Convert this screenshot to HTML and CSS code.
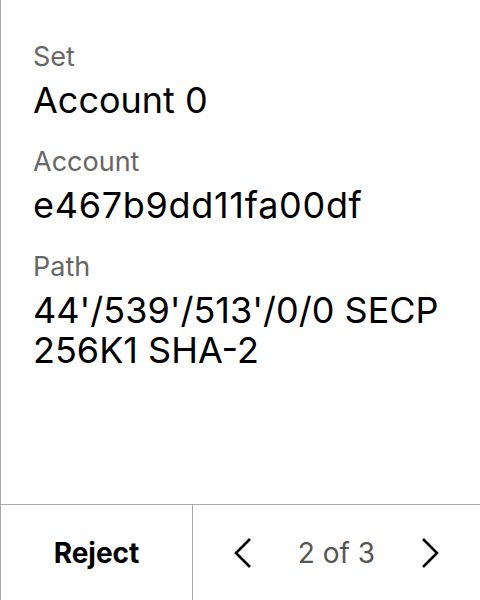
FILE: index.html
```html
<!DOCTYPE html>
<html>
<head>
<meta charset="utf-8">
<link rel="stylesheet" href="styles.css">
</head>
<body>
<div class="screen">
  <div class="content">
    <div class="field">
      <div class="label">Set</div>
      <div class="value">Account 0</div>
    </div>
    <div class="field">
      <div class="label">Account</div>
      <div class="value value-wide">e467b9dd11fa00df</div>
    </div>
    <div class="field">
      <div class="label">Path</div>
      <div class="value">44'/539'/513'/0/0 SECP 256K1 SHA-2</div>
    </div>
  </div>
  <div class="footer">
    <div class="reject">Reject</div>
    <div class="pager">
      <svg class="chev" width="20" height="32" viewBox="0 0 20 32"><path d="M17 2 L3 16 L17 30" fill="none" stroke="#000" stroke-width="2.6"/></svg>
      <span class="count">2 of 3</span>
      <svg class="chev" width="20" height="32" viewBox="0 0 20 32"><path d="M3 2 L17 16 L3 30" fill="none" stroke="#000" stroke-width="2.6"/></svg>
    </div>
  </div>
</div>
</body>
</html>
```
FILE: styles.css
```css
html, body {
  margin: 0;
  padding: 0;
  background: #fff;
}
.screen {
  width: 480px;
  height: 600px;
  box-sizing: border-box;
  border-left: 1px solid #aaa;
  display: flex;
  flex-direction: column;
  font-family: Inter, "Noto Sans", sans-serif;
}
.content {
  flex: 1;
  padding: 41px 24px 0 32px;
  display: flex;
  flex-direction: column;
  gap: 26px;
}
.field {
  display: flex;
  flex-direction: column;
  gap: 7px;
}
.label {
  font-size: 27px;
  line-height: 32px;
  color: #666;
}
.value {
  font-size: 36px;
  line-height: 40px;
  color: #000;
}
.value-wide {
  letter-spacing: 0.7px;
}
.footer {
  height: 95px;
  flex: none;
  border-top: 1px solid #aaa;
  display: flex;
}
.reject {
  width: 191px;
  border-right: 1px solid #aaa;
  display: flex;
  align-items: center;
  justify-content: center;
  font-size: 28px;
  font-weight: 700;
  color: #000;
}
.pager {
  flex: 1;
  display: flex;
  align-items: center;
  justify-content: space-between;
  padding: 0 40px 0 40px;
}
.count {
  font-size: 28px;
  color: #555;
}
.chev {
  display: block;
}
```
